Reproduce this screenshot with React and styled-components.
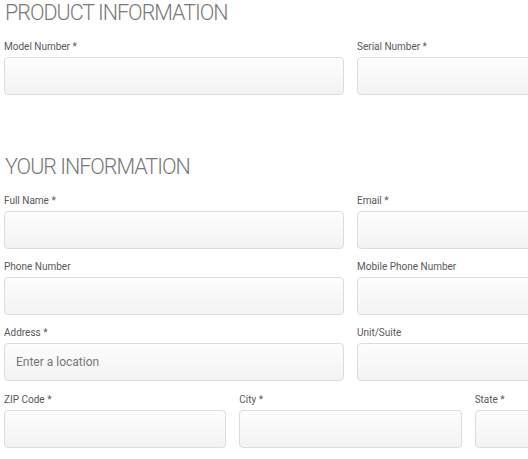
import styled, { createGlobalStyle } from "styled-components";

const Global = createGlobalStyle`
  html, body {
    margin: 0;
    padding: 0;
    background: #fff;
    overflow: hidden;
  }
  body {
    font-family: Roboto, "Open Sans", sans-serif;
  }
`;

const Page = styled.div`
  padding: 0 0 0 4px;
  width: 693px;
`;

const Section = styled.section`
  display: flow-root;
  padding-bottom: ${(p) => p.$after || 0}px;
`;

const Heading = styled.h2`
  margin: 0 0 14px 1px;
  font-size: 21.5px;
  line-height: 26px;
  font-weight: 300;
  letter-spacing: -1px;
  color: #7a7a7a;
`;

const Row = styled.div`
  display: grid;
  grid-template-columns: repeat(${(p) => p.$cols || 2}, 1fr);
  column-gap: 13px;
  margin-bottom: ${(p) => p.$gap || 11}px;
`;

const Field = styled.div`
  display: flex;
  flex-direction: column;
`;

const Label = styled.label`
  font-size: 10px;
  line-height: 14px;
  color: #595959;
  margin-bottom: 3px;
`;

const Input = styled.input`
  box-sizing: border-box;
  height: 38px;
  width: 100%;
  border: 1px solid #dcdcdc;
  border-radius: 4px;
  background: linear-gradient(#fdfdfd, #f3f3f3);
  padding: 0 11px;
  font-family: Roboto, "Open Sans", sans-serif;
  font-size: 12px;
  color: #444;
  outline: none;
  &::placeholder {
    color: #777;
  }
`;

const rows1 = [[{ label: "Model Number *" }, { label: "Serial Number *" }]];

const rows2 = [
  [{ label: "Full Name *" }, { label: "Email *" }],
  [{ label: "Phone Number" }, { label: "Mobile Phone Number" }],
  [{ label: "Address *", placeholder: "Enter a location" }, { label: "Unit/Suite" }],
  [{ label: "ZIP Code *" }, { label: "City *" }, { label: "State *" }],
];

const Fields = ({ rows }) =>
  rows.map((row, i) => (
    <Row key={i} $cols={row.length} $gap={i === 2 ? 12 : 11}>
      {row.map((f) => (
        <Field key={f.label}>
          <Label>{f.label}</Label>
          <Input placeholder={f.placeholder || ""} />
        </Field>
      ))}
    </Row>
  ));

export default function App() {
  return (
    <>
      <Global />
      <Page>
        <Section $after={48}>
          <Heading>PRODUCT INFORMATION</Heading>
          <Fields rows={rows1} />
        </Section>
        <Section>
          <Heading>YOUR INFORMATION</Heading>
          <Fields rows={rows2} />
        </Section>
      </Page>
    </>
  );
}
